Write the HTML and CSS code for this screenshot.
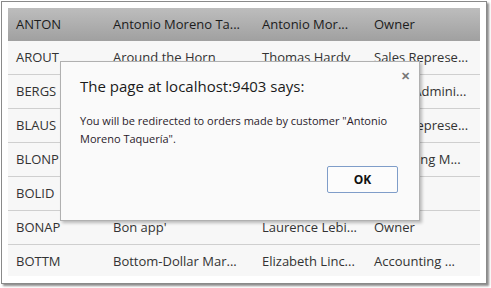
FILE: index.html
```html
<!DOCTYPE html>
<html lang="en">

<head>
    <meta charset="UTF-8" />
    <title>Customers</title>
    <link rel="stylesheet" href="styles.css">
</head>

<body>
    <div class="frame">
        <div class="grid">
            <div class="row head">
                <span>ANTON</span><span>Antonio Moreno Ta...</span><span>Antonio Mor...</span><span>Owner</span>
            </div>
            <div class="row">
                <span>AROUT</span><span>Around the Horn</span><span>Thomas Hardy</span><span>Sales Represe...</span>
            </div>
            <div class="row">
                <span>BERGS</span><span>Berglunds snabbköp</span><span>Christina Ber...</span><span>Order Admini...</span>
            </div>
            <div class="row">
                <span>BLAUS</span><span>Blauer See Delikat...</span><span>Hanna Moos</span><span>Sales Represe...</span>
            </div>
            <div class="row">
                <span>BLONP</span><span>Blondesddsl père et...</span><span>Frédérique Ci...</span><span>Marketing M...</span>
            </div>
            <div class="row">
                <span>BOLID</span><span>Bólido Comidas pr...</span><span>Martín Sommer</span><span>Owner</span>
            </div>
            <div class="row">
                <span>BONAP</span><span>Bon app'</span><span>Laurence Lebi...</span><span>Owner</span>
            </div>
            <div class="row">
                <span>BOTTM</span><span>Bottom-Dollar Mar...</span><span>Elizabeth Linc...</span><span>Accounting ...</span>
            </div>

            <div class="dialog">
                <div class="dialog-title">The page at localhost:9403 says:</div>
                <span class="close">&#x2715;</span>
                <p class="dialog-text">You will be redirected to orders made by customer "Antonio Moreno Taquería".</p>
                <div class="dialog-actions">
                    <button type="button" class="ok">OK</button>
                </div>
            </div>
        </div>
    </div>
</body>

</html>
```

FILE: styles.css
```css
* {
    padding: 0;
    margin: 0;
    box-sizing: border-box;
}

body {
    width: 491px;
    height: 288px;
    background: white;
    font-family: "Open Sans", "Noto Sans", sans-serif;
    overflow: hidden;
}

.frame {
    margin: 1px 0 0 1px;
    width: 486px;
    height: 283px;
    padding: 6px;
    border: 1px solid #8a8a8a;
    background: white;
    box-shadow: 2px 2px 2px rgba(0, 0, 0, 0.45);
}

.grid {
    position: relative;
    height: 268px;
    overflow: hidden;
    background: #f7f7f7;
}

.row {
    display: grid;
    grid-template-columns: 97px 149px 112px 113px;
    height: 34px;
    border-bottom: 1px solid #cfcfcf;
    font-size: 13px;
    color: #333;
}

.row span {
    padding: 0 8px;
    line-height: 33px;
    white-space: nowrap;
    overflow: hidden;
}

.row.head {
    height: 33px;
    border-bottom: none;
    background: linear-gradient(#bdbdbd, #a0a0a0);
    color: #1c1c1c;
}

.dialog {
    position: absolute;
    left: 52px;
    top: 53px;
    width: 360px;
    height: 160px;
    background: #fafafa;
    border: 1px solid #b0b0b0;
    box-shadow: 2px 2px 3px rgba(0, 0, 0, 0.25);
    padding: 14px 19px 0 19px;
    color: #222;
}

.dialog-title {
    font-size: 15px;
    color: #1a1a1a;
}

.close {
    position: absolute;
    right: 9px;
    top: 6px;
    font-size: 11px;
    font-weight: bold;
    color: #777;
}

.dialog-text {
    margin-top: 16px;
    font-size: 11px;
    line-height: 18px;
    color: #2a1a2a;
}

.dialog-actions {
    display: flex;
    justify-content: flex-end;
    margin-top: 18px;
    padding-right: 2px;
}

.ok {
    width: 71px;
    height: 27px;
    background: #fcfcfc;
    border: 1px solid #7f9dc9;
    border-radius: 2px;
    font-family: "Open Sans", sans-serif;
    font-weight: bold;
    font-size: 12px;
    color: #111;
}
```
